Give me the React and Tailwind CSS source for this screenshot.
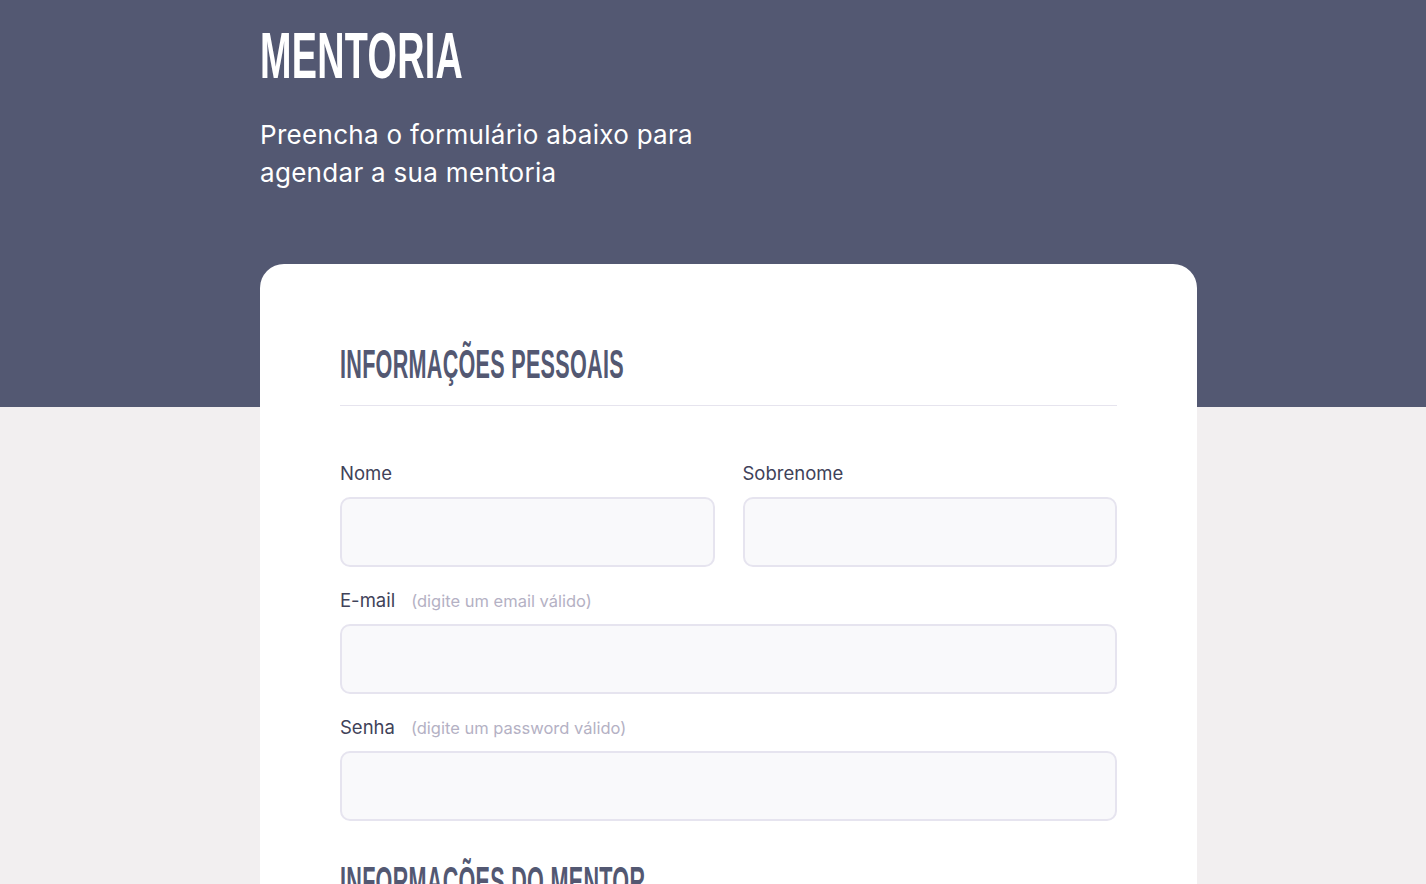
export default function App() {
  const heading = { fontFamily: '"Liberation Sans", Arial, sans-serif' };
  const body = { fontFamily: 'Inter, "Noto Sans", sans-serif' };

  return (
    <div className="min-h-screen bg-[#f2eff0]" style={body}>
      {/* topo */}
      <div className="bg-[#535872] h-[407px]">
        <div className="pl-[260px] pt-[24px]">
          <h1
            className="text-white font-bold text-[64px] leading-none uppercase origin-left scale-x-[0.59] tracking-[0.5px]"
            style={heading}
          >
            Mentoria
          </h1>
          <p className="mt-[28px] text-white text-[26px] leading-[38px] tracking-[0.3px] w-[470px]">
            Preencha o formulário abaixo para agendar a sua mentoria
          </p>
        </div>
      </div>

      {/* card */}
      <div className="pl-[260px] -mt-[143px]">
        <div className="w-[937px] bg-white rounded-[24px] px-[80px] pt-[80px] pb-[80px]">
          <h2
            className="text-[#535872] font-bold text-[40px] leading-none uppercase origin-left scale-x-[0.54] tracking-[0.5px]"
            style={heading}
          >
            Informações pessoais
          </h2>
          <div className="mt-[21px] h-px bg-[#e6e4ee]" />

          <div className="mt-[56px] grid grid-cols-2 gap-x-[28px]">
            <Field label="Nome" />
            <Field label="Sobrenome" />
          </div>
          <div className="mt-[22px]">
            <Field label="E-mail" hint="(digite um email válido)" />
          </div>
          <div className="mt-[22px]">
            <Field label="Senha" hint="(digite um password válido)" />
          </div>

          <h2
            className="mt-[40px] text-[#535872] font-bold text-[40px] leading-none uppercase origin-left scale-x-[0.54] tracking-[0.5px]"
            style={heading}
          >
            Informações do mentor
          </h2>
          <div className="mt-[21px] h-px bg-[#e6e4ee]" />
          <div className="h-[200px]" />
        </div>
      </div>
    </div>
  );
}

function Field({ label, hint }) {
  return (
    <div>
      <div className="h-[24px] flex items-center gap-[16px]">
        <span className="text-[18.5px] text-[#3f4259]">{label}</span>
        {hint && <span className="text-[16.5px] text-[#b4b1c4]">{hint}</span>}
      </div>
      <input
        type="text"
        className="mt-[11px] w-full h-[70px] rounded-[10px] border-2 border-[#e6e4ef] bg-[#f9f9fb] outline-none px-4"
      />
    </div>
  );
}
